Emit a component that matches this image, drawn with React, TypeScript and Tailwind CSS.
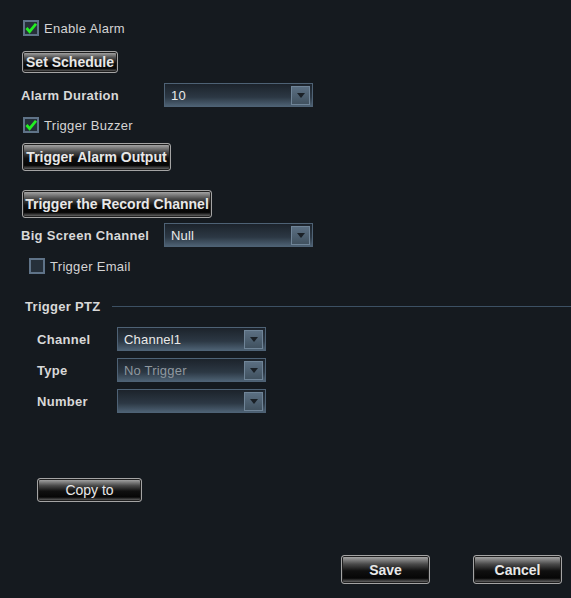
import React from "react";

const font = { fontFamily: '"Liberation Sans", Arial, sans-serif' };

function Check({ checked, label }: { checked?: boolean; label: string }) {
  return (
    <label className="flex h-4 items-center gap-[5px] whitespace-nowrap text-[13px] leading-none tracking-[0.3px] text-[#d4d4d4]">
      <span className="flex h-4 w-4 items-center justify-center border-2 border-[#5f7388] bg-[#26303a]">
        {checked && (
          <svg viewBox="0 0 12 12" className="h-[14px] w-[14px]">
            <path d="M1.5 6 L4.6 9.6 L11 1.8" fill="none" stroke="#22f022" strokeWidth="2.8" />
          </svg>
        )}
      </span>
      {label}
    </label>
  );
}

function Btn({ children, className }: { children: React.ReactNode; className?: string }) {
  return (
    <button
      type="button"
      className={`flex items-center justify-center whitespace-nowrap rounded-[3px] border border-[#a4a4a4] bg-[linear-gradient(to_bottom,#b0b0b0,#4a4a4a_30%,#101010_55%,#060606_82%,#7a7a7a)] text-[14px] font-bold leading-none text-[#e8e8e8] shadow-[inset_0_0_0_1px_#1e1e1e] ${className ?? ""}`}
    >
      {children}
    </button>
  );
}

function Select({ value, disabled, className }: { value: string; disabled?: boolean; className?: string }) {
  return (
    <div
      className={`flex h-6 items-center justify-between border border-[#4e6275] bg-[linear-gradient(to_bottom,#1c232b,#2c3844_60%,#4d6173)] pl-[6px] pr-[2px] ${className ?? ""}`}
    >
      <span className={`whitespace-nowrap text-[13px] leading-none tracking-[0.2px] ${disabled ? "text-[#8f989f]" : "text-[#eaeaea]"}`}>
        {value}
      </span>
      <span className="flex h-[19px] w-[19px] items-center justify-center border border-[#6f8497] bg-[linear-gradient(to_bottom,#5b6f82,#40515f)]">
        <svg viewBox="0 0 8 5" className="h-[5px] w-[8px]">
          <path d="M0 0 L8 0 L4 5 Z" fill="#1a2026" />
        </svg>
      </span>
    </div>
  );
}

const labelCls = "whitespace-nowrap text-[13px] font-bold leading-none tracking-[0.3px]";

export default function App() {
  return (
    <div className="flex h-[598px] w-[571px] flex-col bg-[#151a1f] text-[#d8d8d8]" style={font}>
      <div className="mt-5 pl-[23px]">
        <Check checked label="Enable Alarm" />
      </div>

      <div className="mt-[15px] pl-[22px]">
        <Btn className="h-[22px] w-[96px]">Set Schedule</Btn>
      </div>

      <div className="mt-[10px] flex h-6 items-center pl-[21px]">
        <span className={`w-[143px] ${labelCls}`}>Alarm Duration</span>
        <Select value="10" className="w-[149px]" />
      </div>

      <div className="mt-[10px] pl-[23px]">
        <Check checked label="Trigger Buzzer" />
      </div>

      <div className="mt-[10px] pl-[22px]">
        <Btn className="h-[28px] w-[149px]">Trigger Alarm Output</Btn>
      </div>

      <div className="mt-[19px] pl-[22px]">
        <Btn className="h-[28px] w-[190px]">Trigger the Record Channel</Btn>
      </div>

      <div className="mt-[5px] flex h-6 items-center pl-[21px]">
        <span className={`w-[143px] ${labelCls}`}>Big Screen Channel</span>
        <Select value="Null" className="w-[149px]" />
      </div>

      <div className="mt-[11px] pl-[29px]">
        <Check label="Trigger Email" />
      </div>

      <div className="mt-[25px] flex h-[14px] items-center gap-[11px] pl-[25px]">
        <span className={labelCls}>Trigger PTZ</span>
        <span className="h-px flex-1 bg-[#3c5063]" />
      </div>

      <div className="mt-[14px] flex flex-col gap-[7px] pl-[37px]">
        {[
          ["Channel", "Channel1", false],
          ["Type", "No Trigger", true],
          ["Number", "", false],
        ].map(([label, value, disabled]) => (
          <div key={label as string} className="flex h-6 items-center">
            <span className={`w-[80px] ${labelCls}`}>{label as string}</span>
            <Select value={value as string} disabled={disabled as boolean} className="w-[149px]" />
          </div>
        ))}
      </div>

      <div className="mt-[65px] pl-[37px]">
        <Btn className="h-[24px] w-[105px] font-normal">Copy to</Btn>
      </div>

      <div className="mt-[53px] flex gap-[43px] pl-[341px]">
        <Btn className="h-[29px] w-[89px]">Save</Btn>
        <Btn className="h-[29px] w-[89px]">Cancel</Btn>
      </div>
    </div>
  );
}
